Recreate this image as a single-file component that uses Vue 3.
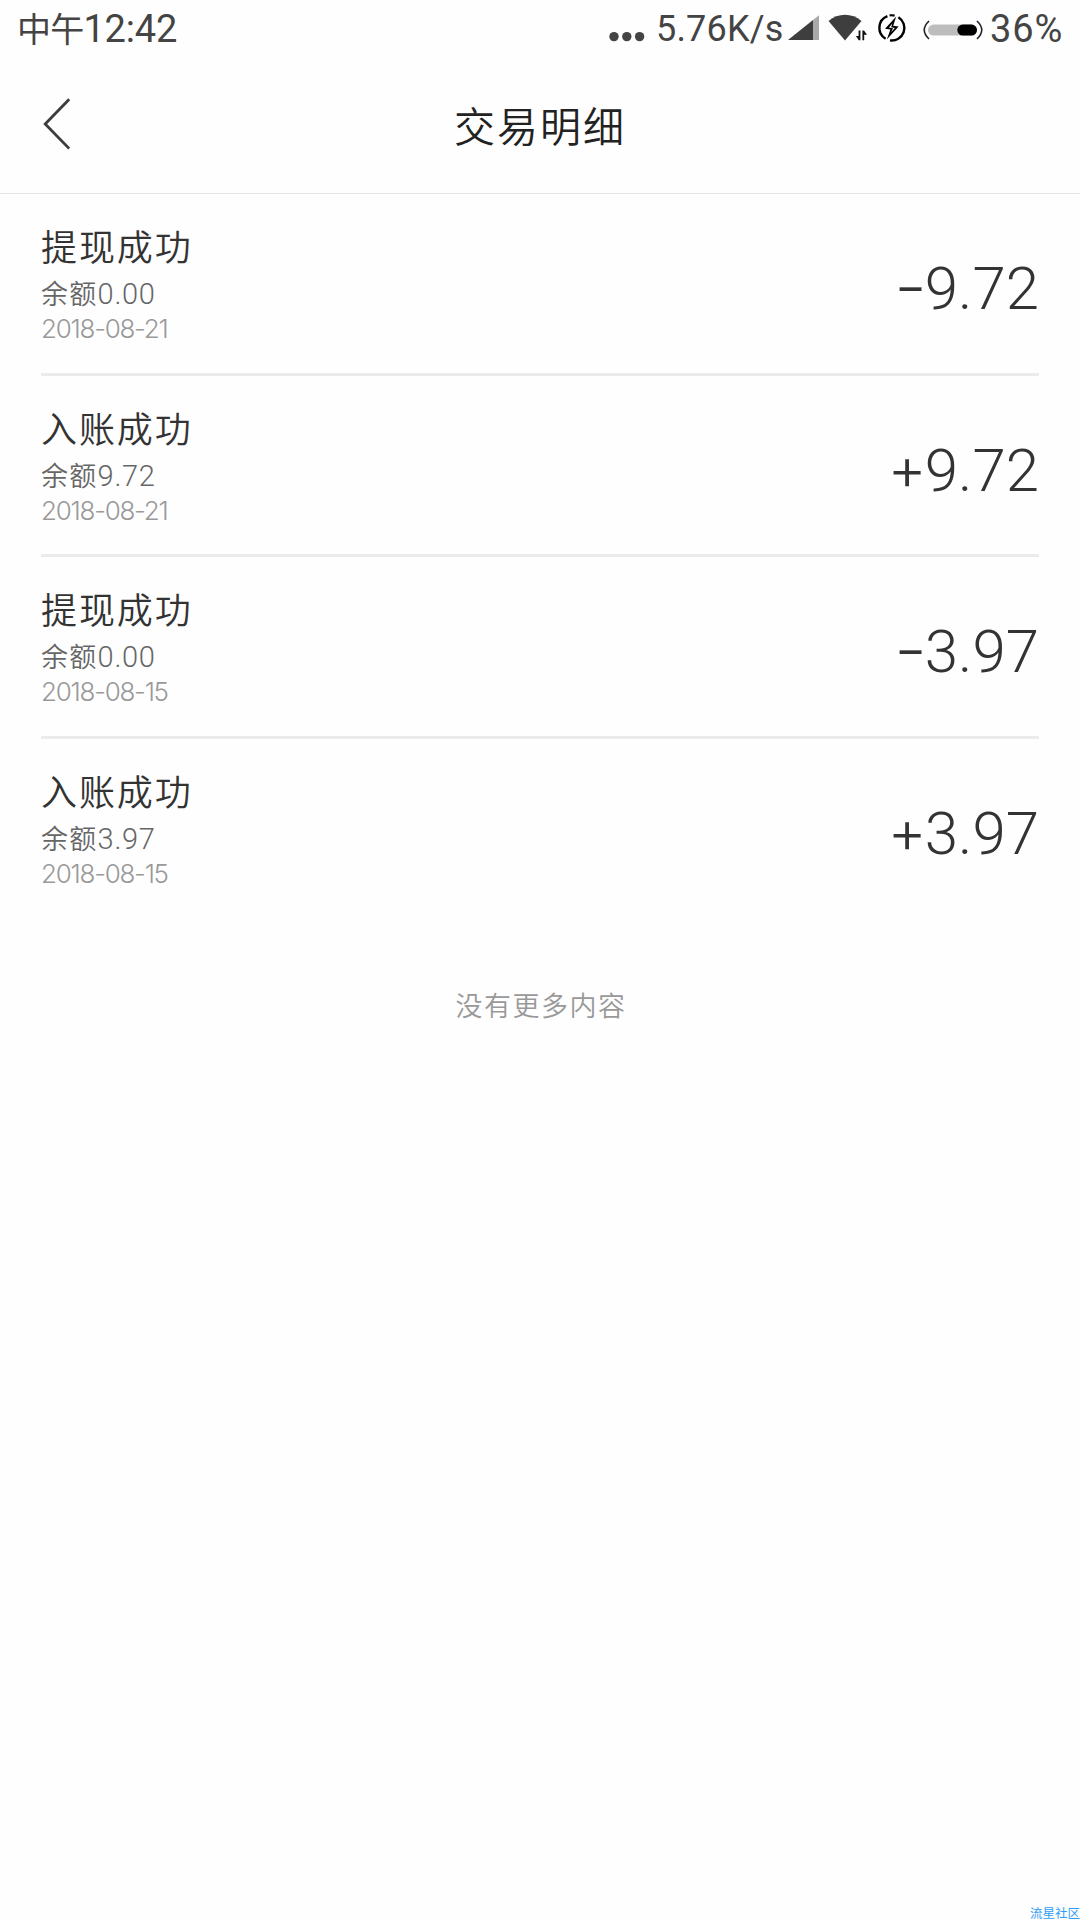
<script setup>

import { reactive } from 'vue'

const state = reactive({
  period: '中午',
  time: '12:42',
  speed: '5.76K/s',
  battery: 36,
  records: [
    { id: 1, title: '提现成功', balance: '0.00', date: '2018-08-21', sign: '-', amount: '9.72' },
    { id: 2, title: '入账成功', balance: '9.72', date: '2018-08-21', sign: '+', amount: '9.72' },
    { id: 3, title: '提现成功', balance: '0.00', date: '2018-08-15', sign: '-', amount: '3.97' },
    { id: 4, title: '入账成功', balance: '3.97', date: '2018-08-15', sign: '+', amount: '3.97' }
  ]
})

</script>

<template>
<div class="screen">
  <div class="status-bar">
    <span class="time"><span class="period">{{ state.period }}</span>{{ state.time }}</span>
    <svg class="dots" width="36" height="12" viewBox="0 0 36 12">
      <circle cx="5" cy="5.6" r="4.7" />
      <circle cx="17.8" cy="5.6" r="4.7" />
      <circle cx="30.6" cy="5.6" r="4.7" />
    </svg>
    <span class="speed">{{ state.speed }}</span>
    <svg class="signal" width="32" height="26" viewBox="0 0 32 26">
      <path d="M0 25 L25 5 V25 Z" fill="#3e3e3e" />
      <path d="M25 5 L31 0.3 V25 H25 Z" fill="#a9a9a9" />
    </svg>
    <svg class="wifi" width="40" height="28" viewBox="0 0 40 28">
      <path d="M0.5 7 C10 -1.2 24 -1.2 33.5 7 L17 26.5 Z" fill="#3e3e3e" />
      <path d="M30.6 16.5 H32.4 V26.3 H30.8 L27.9 22 H30.6 Z M34.4 16.5 H36 L39 20.8 H36.2 V26.3 H34.4 Z" fill="#111" />
    </svg>
    <svg class="charge" width="30" height="30" viewBox="0 0 30 30">
      <path d="M10.4 3.2 A12.6 12.6 0 0 0 8.6 25.8" fill="none" stroke="#000" stroke-width="2.4" />
      <path d="M21.4 4.2 A12.6 12.6 0 0 1 13 27.4" fill="none" stroke="#000" stroke-width="2.4" />
      <path d="M12.6 2.4 A12.6 12.6 0 0 1 17.6 2.6" fill="none" stroke="#000" stroke-width="2.2" />
      <path d="M19.2 3.6 L8 15.8 L13.4 16.6 L9.8 26.6 L21.6 13.6 L16.2 12.8 Z" fill="#000" />
      <path d="M15.4 10.6 L12 14.4 L16 15.2 L14.2 19.2 L17.8 15 L14.2 14.2 Z" fill="#fff" />
    </svg>
    <svg class="battery" width="60" height="20" viewBox="0 0 60 20">
      <path d="M6 1 Q-3.5 10 6 19" fill="none" stroke="#222" stroke-width="1.6" />
      <path d="M54 1 Q63.5 10 54 19" fill="none" stroke="#222" stroke-width="1.6" />
      <rect x="5" y="4.6" width="49" height="11" rx="5.5" fill="#bdbdbd" />
      <rect x="34.3" y="4.6" width="19.7" height="11" rx="5.5" fill="#000" />
    </svg>
    <span class="percent">{{ state.battery }}%</span>
  </div>

  <header class="title-bar">
    <svg class="back" width="28" height="52" viewBox="0 0 28 52">
      <path d="M27.2 1.2 L3.2 26 L27.2 50.6" />
    </svg>
    <h1>交易明细</h1>
  </header>

  <ul class="records">
    <li v-for="item in state.records" :key="item.id" class="record">
      <div class="info">
        <p class="name">{{ item.title }}</p>
        <p class="balance">余额<span class="figures">{{ item.balance }}</span></p>
        <p class="date">{{ item.date }}</p>
      </div>
      <div class="amount">
        <span class="sign" :class="{ minus: item.sign === '-' }">{{ item.sign }}</span>
        <span>{{ item.amount }}</span>
      </div>
    </li>
  </ul>

  <p class="no-more">没有更多内容</p>

  <span class="watermark">流星社区</span>
</div>
</template>

<style>
  body {
    margin: 0;
    background-color: #fefefe;
  }
</style>

<style scoped>
  .screen {
    position: relative;
    width: 1080px;
    height: 1920px;
    overflow: hidden;
    background-color: #fefefe;
    font-family: Roboto, "Noto Sans CJK SC", sans-serif;
    color: #333;
  }

  p, h1, ul {
    margin: 0;
    padding: 0;
    font-weight: 350;
  }

  svg {
    display: block;
    flex: none;
  }

  .status-bar {
    display: flex;
    align-items: flex-start;
    box-sizing: border-box;
    height: 60px;
    padding-left: 17px;
    color: #444;
    white-space: nowrap;
  }

  .time {
    width: 592px;
    margin-top: 6px;
    font-size: 38px;
    line-height: 46px;
    letter-spacing: -0.2px;
  }

  .period {
    font-size: 34px;
    letter-spacing: -0.8px;
  }

  .dots {
    margin-top: 31px;
    fill: #444;
  }

  .speed {
    width: 132px;
    margin: 6px 0 0 11px;
    font-size: 36px;
    line-height: 46px;
    letter-spacing: 0.2px;
  }

  .signal {
    margin-top: 15px;
  }

  .wifi {
    margin: 14px 0 0 8px;
  }

  .charge {
    margin: 13px 0 0 9px;
  }

  .battery {
    margin: 20px 0 0 16px;
  }

  .percent {
    margin: 6px 0 0 7px;
    font-size: 38px;
    line-height: 46px;
    letter-spacing: 0.9px;
  }

  .title-bar {
    display: flex;
    align-items: flex-start;
    box-sizing: border-box;
    height: 134px;
    padding-left: 42px;
    border-bottom: 1px solid #e3e3e3;
  }

  .back {
    margin-top: 38px;
    fill: none;
    stroke: #3c3c3c;
    stroke-width: 2.8;
  }

  .title-bar h1 {
    margin: 38px 0 0 384px;
    font-size: 41px;
    line-height: 60px;
    letter-spacing: 2px;
    color: #222;
  }

  .records {
    padding: 0 41px;
    list-style: none;
  }

  .record {
    display: flex;
    justify-content: space-between;
    box-sizing: border-box;
    height: 181.5px;
    padding-top: 32px;
    border-bottom: 3px solid #ebebeb;
  }

  .record:last-child {
    border-bottom: none;
  }

  .name {
    font-size: 36px;
    line-height: 46px;
    letter-spacing: 1.9px;
  }

  .balance {
    margin-top: 4px;
    font-size: 27px;
    line-height: 36px;
    letter-spacing: 1.3px;
    color: #666;
  }

  .figures {
    font-size: 29px;
    letter-spacing: 0.7px;
  }

  .date {
    font-family: Inter, sans-serif;
    font-size: 26px;
    font-weight: 300;
    line-height: 32px;
    letter-spacing: -1.25px;
    color: #999;
  }

  .amount {
    display: flex;
    margin-top: 28px;
    font-size: 60px;
    font-weight: 300;
    line-height: 70px;
  }

  .sign {
    margin: -3px -2px 0 0;
    font-family: Inter, sans-serif;
  }

  /* the minus bar is drawn wider than the font's hyphen */
  .minus {
    margin-right: 1px;
    transform: scaleX(1.2);
  }

  .no-more {
    margin-top: 67px;
    font-size: 27px;
    line-height: 40px;
    letter-spacing: 1.5px;
    text-indent: 2px;
    text-align: center;
    color: #999;
  }

  .watermark {
    position: absolute;
    right: 0;
    bottom: 0;
    font-size: 12.5px;
    line-height: 12px;
    color: #2f9df5;
  }
</style>
